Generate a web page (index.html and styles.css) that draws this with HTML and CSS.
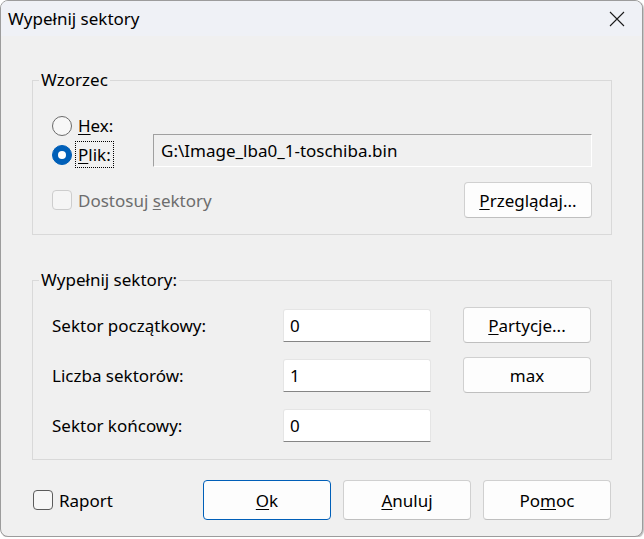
FILE: index.html
```html
<!DOCTYPE html>
<html lang="pl">
<head>
  <meta charset="UTF-8" />
  <title>Wypełnij sektory</title>
  <link rel="stylesheet" href="styles.css">
</head>
<body>
  <div class="dialog">
    <div class="titlebar">
      <span class="title">Wypełnij sektory</span>
      <span class="close">
        <svg width="16" height="16" viewBox="0 0 16 16">
          <path d="M1 1 L15 15 M15 1 L1 15" stroke="#1b1b1b" stroke-width="1.1" fill="none" />
        </svg>
      </span>
    </div>

    <div class="content">
      <!-- Wzorzec -->
      <fieldset class="group">
        <legend>Wzorzec</legend>
        <div class="pattern-row">
          <div class="radio-list">
            <div class="radio"><span class="dot"></span><span class="caption"><u>H</u>ex:</span></div>
            <div class="radio checked"><span class="dot"></span><span class="caption focus"><u>P</u>lik:</span></div>
          </div>
          <div class="path-field">G:\Image_lba0_1-toschiba.bin</div>
        </div>
        <div class="option-row">
          <div class="check disabled"><span class="box"></span><span>Dostosuj <u>s</u>ektory</span></div>
          <div class="btn"><span><u>P</u>rzeglądaj...</span></div>
        </div>
      </fieldset>

      <!-- Zakres -->
      <fieldset class="group range">
        <legend>Wypełnij sektory:</legend>
        <div class="range-grid">
          <span class="lbl">Sektor początkowy:</span>
          <div class="field">0</div>
          <div class="btn"><span><u>P</u>artycje...</span></div>

          <span class="lbl">Liczba sektorów:</span>
          <div class="field">1</div>
          <div class="btn">max</div>

          <span class="lbl">Sektor końcowy:</span>
          <div class="field">0</div>
          <span></span>
        </div>
      </fieldset>

      <div class="footer">
        <div class="check"><span class="box"></span><span>Raport</span></div>
        <div class="actions">
          <div class="btn big default"><span><u>O</u>k</span></div>
          <div class="btn big"><span><u>A</u>nuluj</span></div>
          <div class="btn big"><span>Po<u>m</u>oc</span></div>
        </div>
      </div>
    </div>
  </div>
</body>
</html>
```

FILE: styles.css
```css
body {
  margin: 0;
  background: #fff;
  font-family: "Noto Sans", "Open Sans", sans-serif;
  font-size: 17px;
  color: #000;
}
u {
  text-decoration-thickness: 1px;
  text-underline-offset: 2px;
}
.dialog {
  box-sizing: border-box;
  width: 643px;
  height: 537px;
  border: 1px solid #9c9c9c;
  border-radius: 8px;
  background: #f0f0f0;
  overflow: hidden;
  box-shadow: 1px 1px 1px rgba(0, 0, 0, 0.25);
}
.titlebar {
  height: 35px;
  background: #eff1f6;
  display: flex;
  align-items: center;
  justify-content: space-between;
  padding: 0 17px 0 7px;
}
.close {
  display: flex;
  width: 16px;
  height: 16px;
}
.content {
  padding: 34px 31px 0 31px;
}
.group {
  margin: 0 -1px 0 0;
  padding: 21px 19px 16px;
  border: 1px solid #d9d9d9;
  min-width: 0;
}
.group legend {
  margin-left: -13px;
  padding: 0 2px;
  line-height: 20px;
}
.pattern-row {
  display: flex;
}
.radio-list {
  display: flex;
  flex-direction: column;
}
.radio {
  height: 29px;
  display: flex;
  align-items: center;
  gap: 4px;
}
.radio .dot {
  box-sizing: border-box;
  width: 20px;
  height: 20px;
  border-radius: 50%;
  border: 1px solid #6a6a6a;
  background: #f7f7f7;
  display: flex;
  align-items: center;
  justify-content: center;
}
.radio.checked .dot {
  border-color: #005fb8;
  background: #005fb8;
}
.radio.checked .dot::after {
  content: "";
  width: 8px;
  height: 8px;
  border-radius: 50%;
  background: #fff;
}
.caption {
  padding: 0 2px;
  line-height: 25px;
}
.caption.focus {
  outline: 1px dotted #000;
}
.path-field {
  box-sizing: border-box;
  width: 439px;
  height: 33px;
  margin: auto 0 2px auto;
  padding-left: 7px;
  line-height: 31px;
  background: #f0f0f0;
  border: 1px solid;
  border-color: #a0a0a0 #fff #fff #a0a0a0;
}
.option-row {
  margin-top: 13px;
  display: flex;
  align-items: center;
  justify-content: space-between;
}
.check {
  display: flex;
  align-items: center;
  gap: 6px;
}
.check .box {
  box-sizing: border-box;
  width: 20px;
  height: 20px;
  border: 1px solid #5c5c5c;
  border-radius: 4px;
  background: #f7f7f7;
}
.check.disabled {
  color: #6d6d6d;
}
.check.disabled .box {
  border-color: #cdcdcd;
  background: #f5f5f5;
}
.btn {
  box-sizing: border-box;
  width: 128px;
  height: 36px;
  display: flex;
  align-items: center;
  justify-content: center;
  background: #fdfdfd;
  border: 1px solid #d0d0d0;
  border-bottom-color: #bfbfbf;
  border-radius: 4px;
}
.btn.big {
  height: 40px;
}
.btn.default {
  border-color: #005fb8;
}
.range {
  margin-top: 35px;
  padding-top: 17px;
}
.range-grid {
  display: grid;
  grid-template-columns: 231px 148px 160px;
  grid-auto-rows: 36px;
  row-gap: 14px;
  align-items: center;
}
.range-grid .btn {
  margin-left: 32px;
}
.field {
  box-sizing: border-box;
  height: 33px;
  padding-left: 6px;
  line-height: 31px;
  background: #fff;
  border: 1px solid #e5e5e5;
  border-bottom-color: #868686;
  border-radius: 3px 3px 0 0;
}
.footer {
  margin-top: 20px;
  display: flex;
  align-items: center;
  justify-content: space-between;
}
.footer .check {
  margin-left: 1px;
}
.actions {
  display: flex;
  gap: 12px;
}
```
